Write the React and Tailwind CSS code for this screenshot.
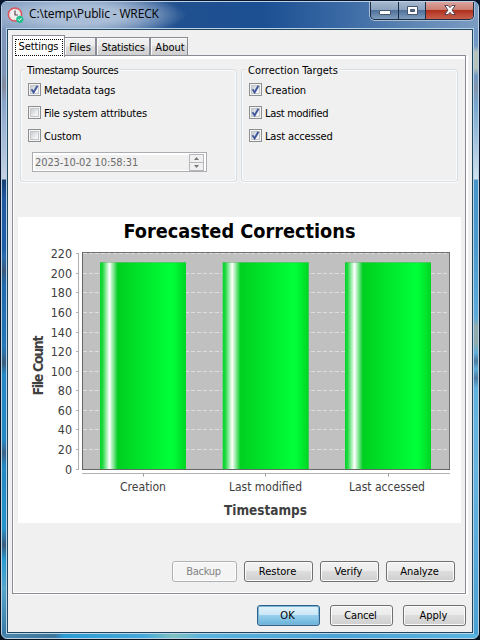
import React from 'react';

const ui = 'font-["DejaVu_Sans_Condensed","DejaVu_Sans",sans-serif] [font-stretch:condensed]';

function AppIcon() {
  return (
    <svg width="17" height="17" viewBox="0 0 17 17" className="shrink-0">
      <circle cx="8" cy="7.5" r="6.6" fill="#f3eeee" stroke="#d9545b" strokeWidth="1.5" />
      <circle cx="8" cy="7.5" r="5" fill="none" stroke="#cfb5b8" strokeWidth="1" strokeDasharray="1 2.9" />
      <path d="M8 3.5V8H11" fill="none" stroke="#554a52" strokeWidth="1.2" />
      <circle cx="12.8" cy="12.3" r="3.6" fill="#22c08c" />
      <path d="M11.2 12.3l1.2 1.2 2.1-2.4" fill="none" stroke="#fff" strokeWidth="1" />
    </svg>
  );
}

function WindowButtons() {
  return (
    <div className="mr-[4px] -mt-[1px] flex h-[19px] w-[104px] overflow-hidden rounded-b-[5px] border border-t-0 border-[#1c2c44] shadow-[0_0_0_1px_#a9bdd4]">
      <div className="flex w-[28px] items-center justify-center border-r border-[#1c2c44] bg-[linear-gradient(#a9bbd0_0%,#8ba3bf_48%,#4f719a_52%,#7f9dbd_100%)]">
        <svg width="14" height="8" className="mt-[5px]"><rect x="1.5" y="1.5" width="11" height="4" rx="0.5" fill="#fff" stroke="#46566c" /></svg>
      </div>
      <div className="flex w-[27px] items-center justify-center border-r border-[#1c2c44] bg-[linear-gradient(#a9bbd0_0%,#8ba3bf_48%,#4f719a_52%,#7f9dbd_100%)]">
        <svg width="13" height="11">
          <path fillRule="evenodd" d="M1.5 1.5h10v8h-10zM4.5 4.5v2h4v-2z" fill="#fff" stroke="#46566c" />
        </svg>
      </div>
      <div className="flex flex-1 items-center justify-center bg-[linear-gradient(#dda9a2_0%,#cc7f73_48%,#b0301c_52%,#c9604c_100%)]">
        <svg width="14" height="12" viewBox="0 0 14 12">
          <path d="M1.8 1.5h3.4L7 3.6l1.800-2.100h3.400L9 6l3.200 4.500H8.800L7 8.400l-1.800 2.100H1.800L5 6z" fill="#fff" stroke="#54485a" strokeWidth="1" />
        </svg>
      </div>
    </div>
  );
}

function Check({ label, checked, track = '' }) {
  return (
    <div className="flex h-[23px] items-center">
      <div className="flex h-[13px] w-[13px] shrink-0 items-center justify-center border border-[#8e8f8f] bg-[#f4f4f4]">
        <div className="h-[9px] w-[9px] border border-[#c3c7cc] bg-[linear-gradient(135deg,#c6cbd2,#f5f5f5_80%)]">
          {checked && (
            <svg width="9" height="9" viewBox="0 0 9 9" className="-ml-px -mt-px">
              <path d="M1.500 4.200L3.600 7.400 7.400 0.800" fill="none" stroke="#40579b" strokeWidth="1.900" />
            </svg>
          )}
        </div>
      </div>
      <span className={`ml-[3px] whitespace-nowrap pt-[3px] ${track}`}>{label}</span>
    </div>
  );
}

function Group({ title, track, children }) {
  return (
    <fieldset className="h-[113px] w-[217px] rounded-[3px] border border-[#d5dfe5] shadow-[inset_0_0_0_1px_#fafafa,0_1px_0_#fff]">
      <div className="-mt-[7px] ml-[4px] h-[14px] leading-[16px]">
        <span className={`bg-[#f0f0f0] px-[2px] whitespace-nowrap ${track}`}>{title}</span>
      </div>
      <div className="pl-[7px] pt-[1px]">{children}</div>
    </fieldset>
  );
}

function Button({ children, width, variant = 'normal', track = '' }) {
  const styles = {
    normal: 'border-[#707070] bg-[linear-gradient(#f2f2f2_0%,#ebebeb_49%,#dddddd_50%,#cfcfcf_100%)] shadow-[inset_0_0_0_1px_#fbfbfb] text-black',
    disabled: 'border-[#adb2b5] bg-[#f4f4f4] shadow-[inset_0_0_0_1px_#fcfcfc] text-[#838383]',
    primary: 'border-[#2c628b] bg-[linear-gradient(#e3f3fb_0%,#c7e6f6_49%,#98cfec_50%,#68b1da_100%)] shadow-[inset_0_0_0_1px_#7fb4d3] text-black',
  };
  return (
    <button className={`flex h-[21px] items-center justify-center rounded-[3px] border pb-px pr-[2px] leading-none ${width} ${styles[variant]} ${track}`}>
      {children}
    </button>
  );
}

function Chart() {
  const ticks = [0, 20, 40, 60, 80, 100, 120, 140, 160, 180, 200, 220];
  const y = (v) => Math.round(251.5 - v * 0.978) + 0.5;
  const bars = [
    { x: 82, label: 'Creation', tx: 102, w: 46 },
    { x: 204.7, label: 'Last modified', tx: 211, w: 73 },
    { x: 327, label: 'Last accessed', tx: 331, w: 76 },
  ];
  return (
    <svg width="443" height="306" className="block bg-white">
      <defs>
        <linearGradient id="bar">
          <stop offset="0" stopColor="#00d627" />
          <stop offset="0.03" stopColor="#20d840" />
          <stop offset="0.11" stopColor="#ffffff" />
          <stop offset="0.2" stopColor="#10d030" />
          <stop offset="0.21" stopColor="#00d020" />
          <stop offset="0.82" stopColor="#00ff38" />
          <stop offset="0.86" stopColor="#00fc36" />
          <stop offset="1" stopColor="#00d424" />
        </linearGradient>
      </defs>
      <text x="105.500" y="21" textLength="232" lengthAdjust="spacingAndGlyphs" fontSize="20" fontWeight="700">Forecasted Corrections</text>
      <rect x="64.500" y="35.500" width="367" height="217" fill="#c0c0c0" stroke="#707070" />
      {ticks.map((v) => (
        <g key={v}>
          {v > 0 && <path d={`M65 ${y(v)}H431`} stroke="#dedede" strokeDasharray="4 2" />}
          <path d={`M58 ${y(v)}h3`} stroke="#b0b0b0" />
          <text x="54" y={y(v) + 4.5} textAnchor="end" textLength={String(v).length * 7.1} lengthAdjust="spacingAndGlyphs" fontSize="12.500" fill="#404040">{v}</text>
        </g>
      ))}
      <path d="M60.500 36V252M64 256.500H432" stroke="#b0b0b0" fill="none" />
      {bars.map((b) => (
        <g key={b.label}>
          <rect x={b.x} y="45" width="86" height="207" fill="url(#bar)" />
          <path d={`M${b.x} 45.500h86`} stroke="#7fae84" strokeOpacity="0.6" />
          <path d={`M${Math.floor(b.x) + 43.5} 257v2.500`} stroke="#999" />
          <text x={b.tx} y="274" textLength={b.w} lengthAdjust="spacingAndGlyphs" fontSize="12.500" fill="#404040">{b.label}</text>
        </g>
      ))}
      <path d="M64.500 35V252.500H432" stroke="#666" fill="none" />
      <text x="206" y="298" textLength="83" lengthAdjust="spacingAndGlyphs" fontSize="14" fontWeight="700" fill="#404040">Timestamps</text>
      <text transform="translate(25 178.5) rotate(-90)" textLength="60" fontSize="14" fontWeight="700" fill="#404040">File Count</text>
    </svg>
  );
}

function Tab({ children, width, track = '' }) {
  return (
    <div className={`flex h-[18px] items-center justify-center border border-b-0 border-[#898c95] bg-[linear-gradient(#f2f2f2_0%,#ebebeb_48%,#dddddd_50%,#d0d0d0_100%)] pt-[3px] shadow-[inset_1px_1px_0_#fafafa] ${width} ${track}`}>
      {children}
    </div>
  );
}

export default function App() {
  return (
    <div className={`h-[640px] w-[480px] overflow-hidden bg-[linear-gradient(#07152f,#04101c)] p-px text-[11px] text-black ${ui}`}>
      <div className="flex h-[638px] w-[478px] flex-col overflow-hidden rounded-[6px] border border-[#bcd0e2] bg-[#3f9dd0]">
        <div className="flex h-[26px] shrink-0 items-start bg-[radial-gradient(ellipse_110px_22px_at_75px_13px,#a9bdd6_40%,transparent_100%),linear-gradient(90deg,#7d98bd_0%,#7794bd_20%,#20508f_37%,#1c5093_55%,#3b6aa5_72%,#5b83b2_85%,#7b9cc3_100%)]">
          <div className="flex h-[26px] flex-1 items-center pl-[5px]">
            <AppIcon />
            <span className='ml-[5px] -mt-[2px] whitespace-nowrap font-["Open_Sans","Noto_Sans",sans-serif] text-[12px] tracking-[-0.14px] [font-stretch:normal]'>C:\temp\Public - WRECK</span>
          </div>
          <WindowButtons />
        </div>
        <div className="flex h-[606px] shrink-0">
          <div className="w-[4px] bg-[linear-gradient(#7f98bd_0px,#7e93b5_45px,#848b9c_58px,#8aa5cb_75px,#c4d2e4_151px,#183f70_152px,#2058a0_170px,#205fa8_220px,#2a6bac_230px,#3a5a7c_243px,#206aae_256px,#2578b8_320px,#3a5e7c_335px,#2488c4_346px,#2488c4_412px,#3a6488_425px,#2488c4_438px,#2494cc_500px,#3a5d7e_517px,#289bd0_532px,#55a6cb_560px,#3879a5_606px)]" />
          <div className="w-[468px] border border-[#b9d4e6]">
            <div className="flex h-[604px] flex-col border border-[#21445f] bg-[#f0f0f0]">
              <div className="mt-[5px] flex h-[20px] shrink-0 items-end pl-[4px]">
                <div className="relative -mb-[2px] flex h-[22px] w-[53px] items-center justify-center border border-b-0 border-[#898c95] bg-white p-[2px] pb-[1px]">
                  <div className="flex h-[17px] w-[48px] shrink-0 items-center justify-center border border-dotted border-black tracking-[-0.1px]">Settings</div>
                </div>
                <Tab width="w-[31px] border-l-0">Files</Tab>
                <Tab width="w-[54px]" track="tracking-[-0.2px]">Statistics</Tab>
                <Tab width="w-[38px] pl-[2px]">About</Tab>
              </div>
              <div className="ml-[4px] h-[539px] w-[454px] shrink-0 border border-[#898c95] shadow-[2px_1px_0_#fff]">
                <div className="flex h-full flex-col border border-r-0 border-t-[3px] border-white">
                  <div className="mt-[10px] flex gap-[4px] pl-[6px]">
                    <Group title="Timestamp Sources" track="tracking-[-0.37px]">
                      <Check label="Metadata tags" checked />
                      <Check label="File system attributes" track="tracking-[-0.18px]" />
                      <Check label="Custom" track="tracking-[-0.1px]" />
                      <div className="ml-[4px] mt-[5px] flex h-[20px] w-[175px] items-center border border-[#abadb3] bg-white p-[2px]">
                        <div className="flex h-[15px] flex-1 items-center bg-[#f0f0f0] pt-[3px] tracking-[-0.1px] text-[#6d6d6d]">2023-10-02 10:58:31</div>
                        <div className="flex h-[17px] w-[15px] flex-col border border-[#b5b7bb] bg-[#f0f0f0]">
                          <div className="flex flex-1 items-center justify-center border-b border-[#b5b7bb]"><svg width="5" height="3"><path d="M0 3L2.500 0 5 3z" fill="#777" /></svg></div>
                          <div className="flex flex-1 items-center justify-center"><svg width="5" height="3"><path d="M0 0L2.500 3 5 0z" fill="#777" /></svg></div>
                        </div>
                      </div>
                    </Group>
                    <Group title="Correction Targets" track="tracking-[0px]">
                      <Check label="Creation" checked track="tracking-[-0.1px]" />
                      <Check label="Last modified" checked track="tracking-[-0.3px]" />
                      <Check label="Last accessed" checked track="tracking-[-0.15px]" />
                    </Group>
                  </div>
                  <div className="ml-[4px] mt-[35px]"><Chart /></div>
                  <div className="mt-[38px] flex justify-end gap-[7px] pr-[10px]">
                    <Button width="w-[65px]" variant="disabled" track="tracking-[-0.25px]">Backup</Button>
                    <Button width="w-[69px]">Restore</Button>
                    <Button width="w-[59px]">Verify</Button>
                    <Button width="w-[69px]" track="tracking-[-0.1px]">Analyze</Button>
                  </div>
                </div>
              </div>
              <div className="mt-[11px] flex justify-end gap-[10px] pr-[6px]">
                <Button width="w-[63px]" variant="primary">OK</Button>
                <Button width="w-[63px]" track="tracking-[-0.2px]">Cancel</Button>
                <Button width="w-[63px]">Apply</Button>
              </div>
            </div>
          </div>
          <div className="w-[4px] bg-[linear-gradient(#7096c4_0px,#7399c5_18px,#b5c3bb_24px,#b5c3bb_40px,#7099c4_48px,#8494ae_60px,#76a4cc_75px,#d0e2ef_151px,#4695c8_152px,#4a9bcd_220px,#5baada_290px,#8fabac_298px,#8fabac_315px,#5caedb_325px,#4d7ba0_333px,#5caedb_341px,#4d7ba0_350px,#5fb2df_360px,#66b4e0_440px,#48a0d2_606px)]" />
        </div>
        <div className="h-[4px] shrink-0 bg-[linear-gradient(90deg,#4c87ad_0%,#3d759c_11%,#2a9cd4_13%,#45a9da_30%,#7fc2c0_36%,#5ab4de_42%,#4aa4d6_70%,#58b4e0_100%)]" />
      </div>
    </div>
  );
}
